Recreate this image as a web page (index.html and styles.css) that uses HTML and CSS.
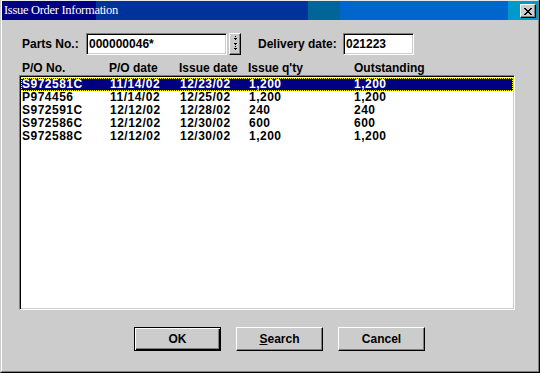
FILE: index.html
```html
<!DOCTYPE html>
<html lang="en">

<head>
  <meta charset="UTF-8" />
  <title>Issue Order Information</title>
  <link rel="stylesheet" href="styles.css">
</head>

<body>
  <div class="window">
    <div class="frame">
      <div class="titlebar">
        <span class="title">Issue Order Information</span>
        <div class="close">
          <svg width="8" height="7" viewBox="0 0 8 7" shape-rendering="crispEdges">
            <path d="M0 0h2v1h-2zM6 0h2v1h-2zM1 1h2v1h-2zM5 1h2v1h-2zM2 2h4v1h-4zM3 3h2v1h-2zM2 4h4v1h-4zM1 5h2v1h-2zM5 5h2v1h-2zM0 6h2v1h-2zM6 6h2v1h-2z" fill="#000" />
          </svg>
        </div>
      </div>

      <div class="content">
        <div class="form-row">
          <label class="parts-label">Parts No.:</label>
          <div class="field parts">000000046*</div>
          <div class="spin">
            <svg width="5" height="16" viewBox="0 0 5 16" shape-rendering="crispEdges">
              <path d="M2 0h1v1h-1zM1 2h3v1h-3zM2 3h1v1h-1zM1 7h3v1h-3zM2 8h1v1h-1zM2 10h1v1h-1zM1 12h3v1h-3zM2 13h1v1h-1z" fill="#000" />
            </svg>
          </div>
          <label class="delivery-label">Delivery date:</label>
          <div class="field delivery">021223</div>
        </div>

        <div class="cols header">
          <span>P/O No.</span>
          <span>P/O date</span>
          <span>Issue date</span>
          <span>Issue q'ty</span>
          <span>Outstanding</span>
        </div>

        <div class="listbox">
          <div class="cols row selected">
            <span>S972581C</span><span>11/14/02</span><span>12/23/02</span><span>1,200</span><span>1,200</span>
          </div>
          <div class="cols row">
            <span>P974456</span><span>11/14/02</span><span>12/25/02</span><span>1,200</span><span>1,200</span>
          </div>
          <div class="cols row">
            <span>S972591C</span><span>12/12/02</span><span>12/28/02</span><span>240</span><span>240</span>
          </div>
          <div class="cols row">
            <span>S972586C</span><span>12/12/02</span><span>12/30/02</span><span>600</span><span>600</span>
          </div>
          <div class="cols row">
            <span>S972588C</span><span>12/12/02</span><span>12/30/02</span><span>1,200</span><span>1,200</span>
          </div>
        </div>

        <div class="buttons">
          <button class="btn default">OK</button>
          <button class="btn"><u>S</u>earch</button>
          <button class="btn">Cancel</button>
        </div>
      </div>
    </div>
  </div>
</body>

</html>
```

FILE: styles.css
```css
body {
  margin: 0;
  padding: 0;
  background-color: #ccc;
}

.window {
  width: 540px;
  height: 373px;
  box-sizing: border-box;
  background-color: #ccc;
  border-left: 1px solid #ccc;
  border-right: 1px solid #000;
  border-bottom: 1px solid #000;
  font-family: "Liberation Sans", Arial, sans-serif;
  font-size: 12px;
  font-weight: bold;
  color: #000;
}

.frame {
  height: 100%;
  box-sizing: border-box;
  border-top: 1px solid #e8e8e8;
  border-left: 1px solid #fff;
  border-right: 1px solid #808080;
  border-bottom: 1px solid #808080;
}

.titlebar {
  height: 19px;
  display: flex;
  align-items: center;
  justify-content: space-between;
  padding: 0 2px;
  background: linear-gradient(to right,
      #000080 0, #000080 94px,
      #003399 94px, #003399 306px,
      #006699 306px, #006699 338px,
      #0066cc 338px, #0066cc 506px,
      #0099cc 506px);
}

.title {
  font-family: "Liberation Serif", "Times New Roman", serif;
  font-weight: normal;
  font-size: 12.5px;
  letter-spacing: -0.3px;
  color: #fff;
}

.close {
  width: 16px;
  height: 14px;
  margin-top: 1px;
  box-sizing: border-box;
  background-color: #ccc;
  border: 1px solid;
  border-color: #fff #000 #000 #fff;
  box-shadow: inset -1px -1px #808080;
  display: flex;
  align-items: center;
  justify-content: center;
}

.content {
  padding: 13px 0 0 20px;
}

.form-row {
  display: flex;
  align-items: center;
  height: 22px;
}

.parts-label {
  width: 64px;
}

.delivery-label {
  width: 85px;
  margin-left: 17px;
}

.field {
  height: 22px;
  box-sizing: border-box;
  padding-left: 2px;
  line-height: 20px;
  background-color: #fff;
  border: 1px solid;
  border-color: #808080 #fff #fff #808080;
  box-shadow: inset 1px 1px #000, inset -1px -1px #ccc;
}

.parts {
  width: 141px;
}

.delivery {
  width: 71px;
}

.spin {
  width: 12px;
  height: 22px;
  margin-left: 2px;
  box-sizing: border-box;
  border: 1px solid;
  border-color: #fff #000 #000 #fff;
  box-shadow: inset -1px -1px #808080;
  display: flex;
  align-items: center;
  justify-content: center;
}

.cols {
  display: grid;
  grid-template-columns: 88px 70px 69px 105px 1fr;
  white-space: nowrap;
}

.header {
  grid-template-columns: 87px 70px 69px 106px 1fr;
  margin-top: 6px;
  height: 14px;
  line-height: 14px;
}

.listbox {
  width: 496px;
  height: 235px;
  margin-left: -3px;
  box-sizing: border-box;
  background-color: #fff;
  border: 1px solid;
  border-color: #808080 #fff #fff #808080;
  box-shadow: inset 1px 1px #000, inset -1px -1px #ccc;
  padding: 2px 1px;
}

.row {
  height: 13px;
  line-height: 13px;
  padding-left: 1px;
  letter-spacing: 0.5px;
}

.row.selected {
  background-color: #000080;
  color: #fff;
  outline: 1px dotted #ffff00;
  outline-offset: -1px;
}

.buttons {
  display: flex;
  gap: 15px;
  margin: 17px 0 0 112px;
}

.btn {
  width: 87px;
  height: 24px;
  box-sizing: border-box;
  padding: 0;
  background-color: #ccc;
  border: 1px solid;
  border-color: #fff #000 #000 #fff;
  box-shadow: inset -1px -1px #808080;
  font: inherit;
  color: #000;
}

.btn.default {
  border-color: #000;
  box-shadow: inset 1px 1px #fff, inset -1px -1px #000, inset -2px -2px #808080;
}
```
